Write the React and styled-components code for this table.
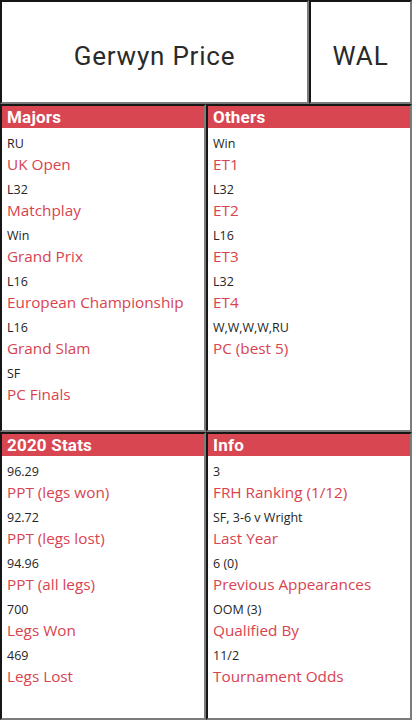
import React from "react";
import styled, { createGlobalStyle } from "styled-components";

const GlobalStyle = createGlobalStyle`
  html, body {
    margin: 0;
    padding: 0;
    background: #ffffff;
  }
  body {
    font-family: "Open Sans", "Noto Sans", sans-serif;
  }
`;

const Page = styled.div`
  width: 412px;
  display: grid;
  grid-template-rows: 104px 328px 288px;
`;

const Row = styled.div`
  display: grid;
  grid-template-columns: ${(props) => props.cols};
  min-height: 0;
`;

const Box = styled.div`
  box-sizing: border-box;
  border-style: solid;
  border-width: 2px;
  border-color: #161616 #7c7c7c #7c7c7c #161616;
  background: #fff;
  min-height: 0;
  overflow: hidden;
`;

const TitleBox = styled(Box)`
  display: flex;
  align-items: center;
  justify-content: center;
  font-family: "Roboto", "Liberation Sans", sans-serif;
  font-size: 26px;
  letter-spacing: 0.8px;
  color: #2a2a2a;
  padding-top: 8px;
`;

const Panel = styled(Box)`
  display: flex;
  flex-direction: column;
`;

const Header = styled.div`
  background: #d74651;
  color: #fff;
  font-family: "Roboto", "Liberation Sans", sans-serif;
  font-weight: 700;
  font-size: 17px;
  line-height: 22px;
  height: 22px;
  padding-left: 5px;
  letter-spacing: 0.2px;
`;

const List = styled.div`
  display: flex;
  flex-direction: column;
  gap: 5px;
  padding: 7px 5px 0 5px;
`;

const Item = styled.div`
  display: flex;
  flex-direction: column;
`;

const Label = styled.div`
  font-size: 12.5px;
  line-height: 18px;
  color: #252525;
`;

const Value = styled.div`
  font-size: 15.3px;
  line-height: 23px;
  color: #d8434f;
`;

const sections = [
  [
    {
      title: "Majors",
      items: [
        ["RU", "UK Open"],
        ["L32", "Matchplay"],
        ["Win", "Grand Prix"],
        ["L16", "European Championship"],
        ["L16", "Grand Slam"],
        ["SF", "PC Finals"],
      ],
    },
    {
      title: "Others",
      items: [
        ["Win", "ET1"],
        ["L32", "ET2"],
        ["L16", "ET3"],
        ["L32", "ET4"],
        ["W,W,W,W,RU", "PC (best 5)"],
      ],
    },
  ],
  [
    {
      title: "2020 Stats",
      items: [
        ["96.29", "PPT (legs won)"],
        ["92.72", "PPT (legs lost)"],
        ["94.96", "PPT (all legs)"],
        ["700", "Legs Won"],
        ["469", "Legs Lost"],
      ],
    },
    {
      title: "Info",
      items: [
        ["3", "FRH Ranking (1/12)"],
        ["SF, 3-6 v Wright", "Last Year"],
        ["6 (0)", "Previous Appearances"],
        ["OOM (3)", "Qualified By"],
        ["11/2", "Tournament Odds"],
      ],
    },
  ],
];

function Section({ title, items }) {
  return (
    <Panel>
      <Header>{title}</Header>
      <List>
        {items.map(([label, value]) => (
          <Item key={value}>
            <Label>{label}</Label>
            <Value>{value}</Value>
          </Item>
        ))}
      </List>
    </Panel>
  );
}

export default function App() {
  return (
    <>
      <GlobalStyle />
      <Page>
        <Row cols="309px 103px">
          <TitleBox>Gerwyn Price</TitleBox>
          <TitleBox>WAL</TitleBox>
        </Row>
        {sections.map((row, i) => (
          <Row key={i} cols="206px 206px">
            {row.map((s) => (
              <Section key={s.title} {...s} />
            ))}
          </Row>
        ))}
      </Page>
    </>
  );
}
